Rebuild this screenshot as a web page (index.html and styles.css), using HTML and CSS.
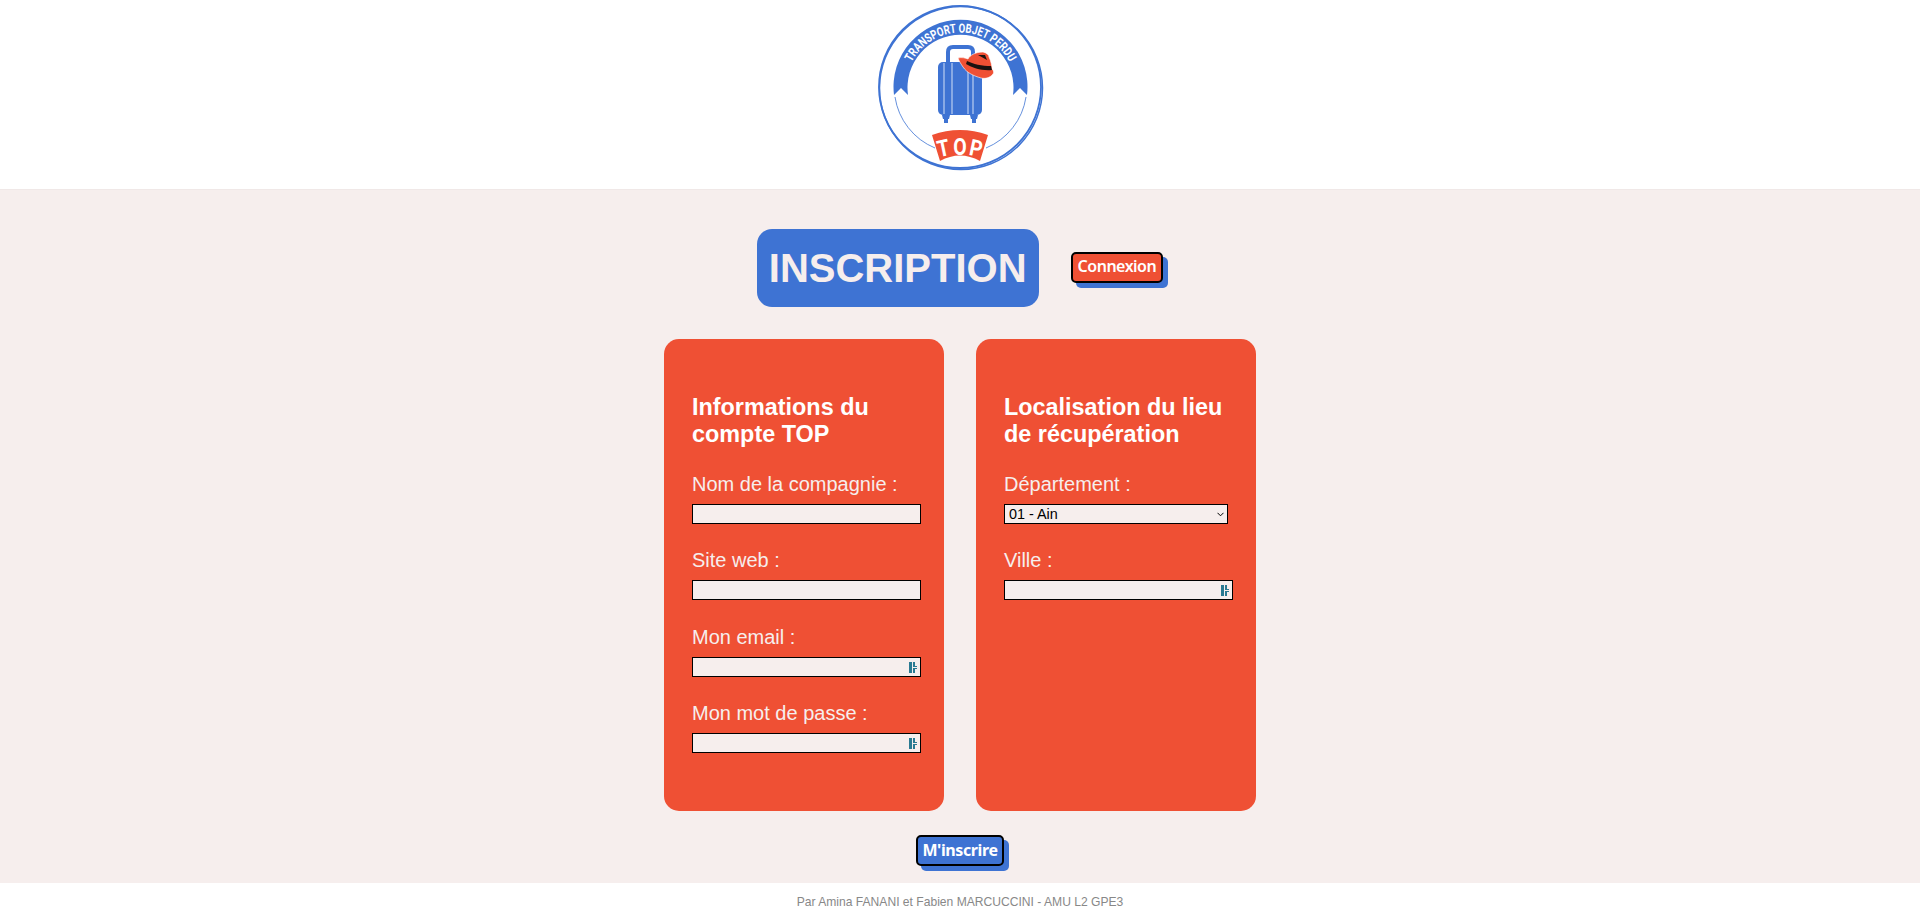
FILE: index.html
```html
<!DOCTYPE html>
<html lang="fr">
<head>
<meta charset="utf-8">
<title>Inscription - TOP</title>
<link rel="stylesheet" href="styles.css">
</head>
<body>
<header class="site-header">
  <svg class="logo" viewBox="0 0 200 180" width="200" height="180" role="img" aria-label="Transport Objet Perdu">
    <defs><path id="band-arc" d="M45.5 87.5 A55 55 0 0 1 155.500 87.5" /></defs>
    <circle class="ring" cx="100" cy="87" r="81"/>
    <circle class="ring-shade" cx="101" cy="88" r="81.500"/>
    <path class="thin" d="M35 97 A66 66 0 0 0 75 148"/>
    <path class="thin" d="M166 97 A66 66 0 0 1 126 148"/>
    <path class="blue" d="M34 95 L41 88 L48 95 A53 53 0 1 1 153 95 L160 88 L167 95 A67 67 0 1 0 34 95 Z"/>
    <text class="band-text" textLength="120" lengthAdjust="spacingAndGlyphs"><textPath href="#band-arc" startOffset="50%" text-anchor="middle">TRANSPORT OBJET PERDU</textPath></text>
    <path class="handle" d="M88 63 V52 Q88 47 93 47 H108 Q113 47 113 52 V63"/>
    <rect class="blue" x="78" y="62" width="44" height="53" rx="5"/>
    <path class="stripe" d="M84 63 V114 M92 63 V114 M108 63 V114 M113 63 V114"/>
    <path class="blue" d="M82 115 H90 L89 119 H88 V123 H84 V119 H83 Z M110 115 H118 L117 119 H116 V123 H112 V119 H111 Z"/>
    <path class="red outline" d="M98 58 C102 57 105 58 108 59 C110 55 116 52 123 52 C127 53 129 55 129 57 C131 61 132 66 132 69 C134 71 134 73 133 74 C130 78 125 79 121 78 C114 76 107 73 103 67 C101 64 99 61 98 58 Z"/>
    <path class="hat-band" d="M107 61 C113 64 122 66 131 66 L132 70 C122 71 113 68 106 64 Z M118 55 L125 55 L127 60 Z"/>
    <path class="red" d="M72 135 Q100 125 128 135 L120 161 Q100 150 80 161 Z"/>
    <text class="top-letter" transform="translate(85 156) rotate(-12) scale(.85 1)">T</text>
    <text class="top-letter" transform="translate(100 155) scale(.85 1)">O</text>
    <text class="top-letter" transform="translate(114.500 156) rotate(12) scale(.85 1)">P</text>
  </svg>
</header>

<main class="content">
  <div class="title-row">
    <h1 class="page-title">INSCRIPTION</h1>
    <a class="btn btn-red" href="#">Connexion</a>
  </div>

  <form class="form">
    <div class="cards">
      <section class="card">
        <h2 class="card-title">Informations du compte TOP</h2>
        <div class="field">
          <label class="label" for="nom">Nom de la compagnie :</label>
          <div class="control"><input class="input" id="nom" type="text"></div>
        </div>
        <div class="field">
          <label class="label" for="site">Site web :</label>
          <div class="control"><input class="input" id="site" type="text"></div>
        </div>
        <div class="field">
          <label class="label" for="email">Mon email :</label>
          <div class="control">
            <input class="input" id="email" type="email">
            <svg class="pm-icon" viewBox="0 0 9 11" width="9" height="11" aria-hidden="true"><path d="M0 0H3V11H0Z M4 0H6V4H8V5H4Z M4 6H8V7H6V11H4Z"/></svg>
          </div>
        </div>
        <div class="field">
          <label class="label" for="mdp">Mon mot de passe :</label>
          <div class="control">
            <input class="input" id="mdp" type="password">
            <svg class="pm-icon" viewBox="0 0 9 11" width="9" height="11" aria-hidden="true"><path d="M0 0H3V11H0Z M4 0H6V4H8V5H4Z M4 6H8V7H6V11H4Z"/></svg>
          </div>
        </div>
      </section>

      <section class="card">
        <h2 class="card-title">Localisation du lieu de récupération</h2>
        <div class="field">
          <label class="label" for="dep">Département :</label>
          <div class="control">
            <select class="select" id="dep"><option>01 - Ain</option></select>
            <svg class="chevron" viewBox="0 0 7 5" width="7" height="5" aria-hidden="true"><path d="M0.500 0.800 L3.500 3.800 L6.500 0.800"/></svg>
          </div>
        </div>
        <div class="field">
          <label class="label" for="ville">Ville :</label>
          <div class="control">
            <input class="input" id="ville" type="text">
            <svg class="pm-icon" viewBox="0 0 9 11" width="9" height="11" aria-hidden="true"><path d="M0 0H3V11H0Z M4 0H6V4H8V5H4Z M4 6H8V7H6V11H4Z"/></svg>
          </div>
        </div>
      </section>
    </div>

    <div class="submit-row">
      <button class="btn btn-blue" type="button">M'inscrire</button>
    </div>
  </form>
</main>

<footer class="site-footer">Par Amina FANANI et Fabien MARCUCCINI - AMU L2 GPE3</footer>
</body>
</html>
```

FILE: styles.css
```css
* { box-sizing: border-box; }

html, body { margin: 0; padding: 0; }

body {
  font-family: "Liberation Sans", Arial, sans-serif;
  background: #fff;
  color: #000;
}

.site-header {
  height: 190px;
  background: #fff;
  border-bottom: 1px solid #f0e8e7;
  display: flex;
  justify-content: center;
  align-items: flex-start;
}

.logo { display: block; }
.ring { fill: none; stroke: #3e73d3; stroke-width: 1.8; }
.ring-shade { fill: none; stroke: #3e73d3; stroke-width: 1.5; }
.thin { fill: none; stroke: #3e73d3; stroke-width: 0.8; }
.blue { fill: #3e73d3; }
.red { fill: #ef5034; }
.outline { stroke: #fff; stroke-width: 0.6; }
.handle { fill: none; stroke: #3e73d3; stroke-width: 4; }
.stripe { fill: none; stroke: #b9cdf0; stroke-width: 1.2; }
.hat-band { fill: #1a1210; }
.band-text {
  font-family: "Roboto", sans-serif;
  font-weight: 700;
  font-size: 12.500px;
  fill: #fff;
}
.top-letter {
  font-family: "Roboto", sans-serif;
  font-weight: 700;
  font-size: 23px;
  fill: #fff;
  text-anchor: middle;
}

.content {
  height: 693px;
  background: #f6eeed;
  padding-top: 39px;
}

.title-row {
  display: flex;
  justify-content: center;
  align-items: flex-start;
  gap: 32px;
}

.page-title {
  margin: 0;
  padding: 16px 12px;
  background: #3e73d3;
  color: #f6eeed;
  font-size: 40px;
  line-height: 46px;
  font-weight: 700;
  border-radius: 15px;
}

.title-row .btn { margin-top: 23px; }

.btn {
  display: inline-block;
  height: 31px;
  padding: 0 5px;
  border: 2px solid #000;
  border-radius: 5px;
  box-shadow: 5px 5px 0 #3e73d3;
  color: #fff;
  font-family: "Noto Sans", sans-serif;
  font-size: 16px;
  font-weight: 600;
  letter-spacing: -0.5px;
  line-height: 25px;
  text-decoration: none;
}
.btn-red { background: #ef5034; }
.btn-blue { background: #3e73d3; font-weight: 700; letter-spacing: -0.4px; padding: 0 4px; }

.cards {
  display: flex;
  justify-content: center;
  gap: 32px;
  margin-top: 32px;
}

.card {
  width: 280px;
  height: 472px;
  padding: 55px 28px 0;
  background: #ef5034;
  border-radius: 15px;
  color: #f6eeed;
}

.card-title {
  margin: 0 0 24.500px;
  font-size: 23.400px;
  line-height: 27px;
  font-weight: 700;
  color: #fff;
}

.field { margin-bottom: 25.500px; }

.label {
  display: block;
  height: 23px;
  margin-bottom: 8px;
  font-size: 20px;
  line-height: 23px;
}

.control {
  position: relative;
  width: 229px;
  height: 20px;
}

.input, .select {
  display: block;
  height: 20px;
  border: 1px solid #000;
  border-radius: 0;
  background: #f6eeed;
  font-family: "Liberation Sans", Arial, sans-serif;
  color: #000;
}
.input { width: 229px; padding: 1px 3px; font-size: 13.333px; }
.select { width: 224px; padding: 0 0 0 4px; font-size: 14.400px; appearance: none; }

.chevron {
  position: absolute;
  top: 8px;
  left: 213px;
  fill: none;
  stroke: #000;
  stroke-width: 1;
  pointer-events: none;
}

.pm-icon {
  position: absolute;
  top: 5px;
  right: 3px;
  fill: #2a7a92;
}

.submit-row {
  display: flex;
  justify-content: center;
  margin-top: 24px;
}

.site-footer {
  height: 38px;
  background: #fff;
  color: #888;
  font-size: 12.100px;
  line-height: 38px;
  text-align: center;
}
```
